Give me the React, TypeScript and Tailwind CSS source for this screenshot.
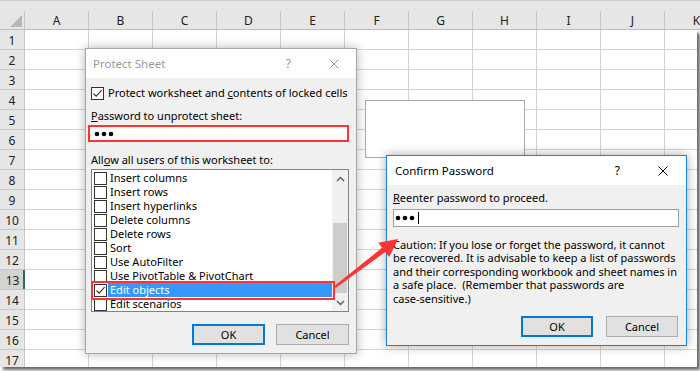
import React from 'react';

const COLS = ['A', 'B', 'C', 'D', 'E', 'F', 'G', 'H', 'I', 'J', 'K'];
const ROWS = Array.from({ length: 17 }, (_, i) => i + 1);

function Box({ checked }: { checked?: boolean }) {
  return (
    <span className="w-[13px] h-[13px] border border-[#333333] bg-white shrink-0 flex items-center justify-center">
      {checked && (
        <svg width="11" height="11" viewBox="0 0 11 11">
          <path d="M1.5 5.5 L4.2 8.2 L9.6 2.2" stroke="#333333" strokeWidth="1.1" fill="none" />
        </svg>
      )}
    </span>
  );
}

function XIcon({ color }: { color: string }) {
  return (
    <svg width="10" height="10" viewBox="0 0 10 10">
      <path d="M0.5 0.5 L9.5 9.5 M9.5 0.5 L0.5 9.5" stroke={color} strokeWidth="1" />
    </svg>
  );
}

function Dots() {
  return (
    <svg width="22" height="6" viewBox="0 0 22 6">
      <circle cx="3" cy="3" r="2.3" fill="#000" />
      <circle cx="10" cy="3" r="2.3" fill="#000" />
      <circle cx="17" cy="3" r="2.3" fill="#000" />
    </svg>
  );
}

function Chevron({ up }: { up?: boolean }) {
  return (
    <svg width="9" height="6" viewBox="0 0 9 6">
      <path d={up ? 'M1 5 L4.5 1.5 L8 5' : 'M1 1 L4.5 4.5 L8 1'} stroke="#606060" strokeWidth="1.5" fill="none" />
    </svg>
  );
}

const ITEMS = [
  'Insert columns',
  'Insert rows',
  'Insert hyperlinks',
  'Delete columns',
  'Delete rows',
  'Sort',
  'Use AutoFilter',
  'Use PivotTable & PivotChart',
  'Edit objects',
  'Edit scenarios',
];

export default function App() {
  return (
    <div className="w-[700px] h-[371px] relative overflow-hidden bg-white font-['Noto_Sans',sans-serif]">
      {/* top band */}
      <div className="h-[11px] bg-[#e6e6e6] border-t border-[#cfcfcf]" />
      {/* column headers */}
      <div className="flex h-[19px] bg-[#e6e6e6] border-b border-[#bfbfbf] overflow-hidden">
        <div className="w-[25px] shrink-0 border-r border-[#c6c6c6] flex items-end justify-end pr-[2px] pb-[2px]">
          <svg width="12" height="12" viewBox="0 0 12 12">
            <path d="M0 12 L12 12 L12 0 Z" fill="#b8b8b8" />
          </svg>
        </div>
        {COLS.map((c) => (
          <div
            key={c}
            className="w-[64px] shrink-0 border-r border-[#c6c6c6] flex items-center justify-center text-[12px] text-[#222222] pt-[1px]"
          >
            {c}
          </div>
        ))}
      </div>
      {/* body */}
      <div className="w-[697px] h-[337px] overflow-hidden bg-white shadow-[3px_3px_3px_rgba(0,0,0,0.6)]">
        {ROWS.map((r) => (
          <div key={r} className="flex h-[20px]">
            {r === 13 ? (
              <div className="w-[25px] shrink-0 border-b border-[#c6c6c6] bg-[#d3d3d3] flex items-center justify-center text-[12px] text-[#222222] pt-[2px] relative">
                {r}
                <span className="absolute right-0 top-0 bottom-0 w-[2px] bg-[#217346]" />
              </div>
            ) : (
              <div className="w-[25px] shrink-0 border-r border-b border-[#c6c6c6] bg-[#e6e6e6] flex items-center justify-center text-[12px] text-[#222222] pt-[2px]">
                {r}
              </div>
            )}
            {COLS.map((c) => (
              <div key={c} className="w-[64px] shrink-0 border-r border-b border-[#d4d4d4]" />
            ))}
          </div>
        ))}
      </div>

      {/* text box shape on sheet */}
      <div className="absolute left-[365px] top-[100px] w-[160px] h-[58px] bg-white border border-[#a9a9a9]" />

      {/* Protect Sheet dialog */}
      <div className="absolute left-[85px] top-[48px] w-[272px] h-[306px] border border-[#a6a6a6] bg-[#f0f0f0] shadow-[0_0_10px_rgba(0,0,0,0.3)] flex flex-col text-[11px] text-black leading-[14px]">
        <div className="h-[29px] bg-white flex items-center pl-[7px] shrink-0">
          <span className="text-[11.5px] text-[#9a9a9a]">Protect Sheet</span>
          <span className="ml-auto text-[12px] text-[#9a9a9a]">?</span>
          <span className="ml-[38px] mr-[17px] flex">
            <XIcon color="#9a9a9a" />
          </span>
        </div>
        <div className="flex-1 flex flex-col pl-[5px] pr-[7px]">
          <div className="mt-[8px] h-[14px] flex items-center gap-[4px]">
            <Box checked />
            <span className="whitespace-nowrap">
              Protect worksheet and <span className="underline">c</span>ontents of locked cells
            </span>
          </div>
          <div className="mt-[9px] h-[14px] whitespace-nowrap">
            <span className="underline">P</span>assword to unprotect sheet:
          </div>
          <div className="mt-[2px] -ml-[3px] w-[261px] h-[17px] bg-white border-2 border-[#ff3333] flex items-center pl-[4px]">
            <Dots />
          </div>
          <div className="mt-[11px] h-[14px] whitespace-nowrap">
            All<span className="underline">o</span>w all users of this worksheet to:
          </div>
          <div className="mt-[2px] w-[258px] h-[143px] border border-[#828282] bg-white flex">
            <div className="flex-1 flex flex-col pt-[1px]">
              {ITEMS.map((it) => (
                <div key={it} className="h-[14px] flex items-center pl-[2px]">
                  <Box checked={it === 'Edit objects'} />
                  {it === 'Edit objects' ? (
                    <span className="ml-[1px] flex-1 h-[14px] bg-[#3399ff] text-white pl-[2px] whitespace-nowrap">{it}</span>
                  ) : (
                    <span className="ml-[1px] flex-1 h-[14px] pl-[2px] whitespace-nowrap">{it}</span>
                  )}
                </div>
              ))}
            </div>
            <div className="w-[16px] bg-[#f0f0f0] flex flex-col">
              <div className="h-[17px] flex items-center justify-center">
                <Chevron up />
              </div>
              <div className="flex-1">
                <div className="mt-[36px] h-[70px] mx-[1px] bg-[#cdcdcd]" />
              </div>
              <div className="h-[17px] flex items-center justify-center">
                <Chevron />
              </div>
            </div>
          </div>
          <div className="mt-[12px] flex justify-end gap-[11px]">
            <div className="w-[73px] h-[21px] border-2 border-[#0078d7] bg-[#e1e1e1] flex items-center justify-center">OK</div>
            <div className="w-[73px] h-[21px] border border-[#adadad] bg-[#e1e1e1] flex items-center justify-center">Cancel</div>
          </div>
        </div>
      </div>

      {/* red annotation box around Edit objects */}
      <div className="absolute left-[91px] top-[281px] w-[244px] h-[19px] border-2 border-[#ff3333]" />

      {/* Confirm Password dialog */}
      <div className="absolute left-[386px] top-[155px] w-[301px] h-[191px] border border-[#1883d7] bg-[#f0f0f0] shadow-[0_0_10px_rgba(0,0,0,0.35)] flex flex-col text-[11px] text-black leading-[14px]">
        <div className="h-[29px] bg-white flex items-center pl-[8px] shrink-0">
          <span className="text-[11.5px]">Confirm Password</span>
          <span className="ml-auto text-[12px]">?</span>
          <span className="ml-[38px] mr-[18px] flex">
            <XIcon color="#000000" />
          </span>
        </div>
        <div className="flex-1 flex flex-col pl-[6px] pr-[7px]">
          <div className="mt-[6px] h-[14px] whitespace-nowrap">
            <span className="underline">R</span>eenter password to proceed.
          </div>
          <div className="mt-[4px] h-[18px] bg-white border border-[#a0a0a0] flex items-center pl-[1px]">
            <Dots />
            <span className="ml-[1px] w-[1px] h-[12px] bg-black" />
          </div>
          <div className="mt-[11px] leading-[13.4px] whitespace-pre">
            {'Caution: If you lose or forget the password, it cannot\nbe recovered. It is advisable to keep a list of passwords\nand their corresponding workbook and sheet names in\na safe place.  (Remember that passwords are\ncase-sensitive.)'}
          </div>
          <div className="mt-[11px] flex justify-end gap-[13px] mr-[1px]">
            <div className="w-[72px] h-[21px] border-2 border-[#0078d7] bg-[#e1e1e1] flex items-center justify-center">OK</div>
            <div className="w-[72px] h-[21px] border border-[#adadad] bg-[#e1e1e1] flex items-center justify-center">Cancel</div>
          </div>
        </div>
      </div>

      {/* red arrow */}
      <svg className="absolute left-0 top-0" width="700" height="371" viewBox="0 0 700 371">
        <polygon
          points="335.7,288 385.3,252 389.2,257.1 398,239 378.3,242.8 382.1,247.8 334.3,286"
          fill="#ff3535"
        />
      </svg>
    </div>
  );
}
